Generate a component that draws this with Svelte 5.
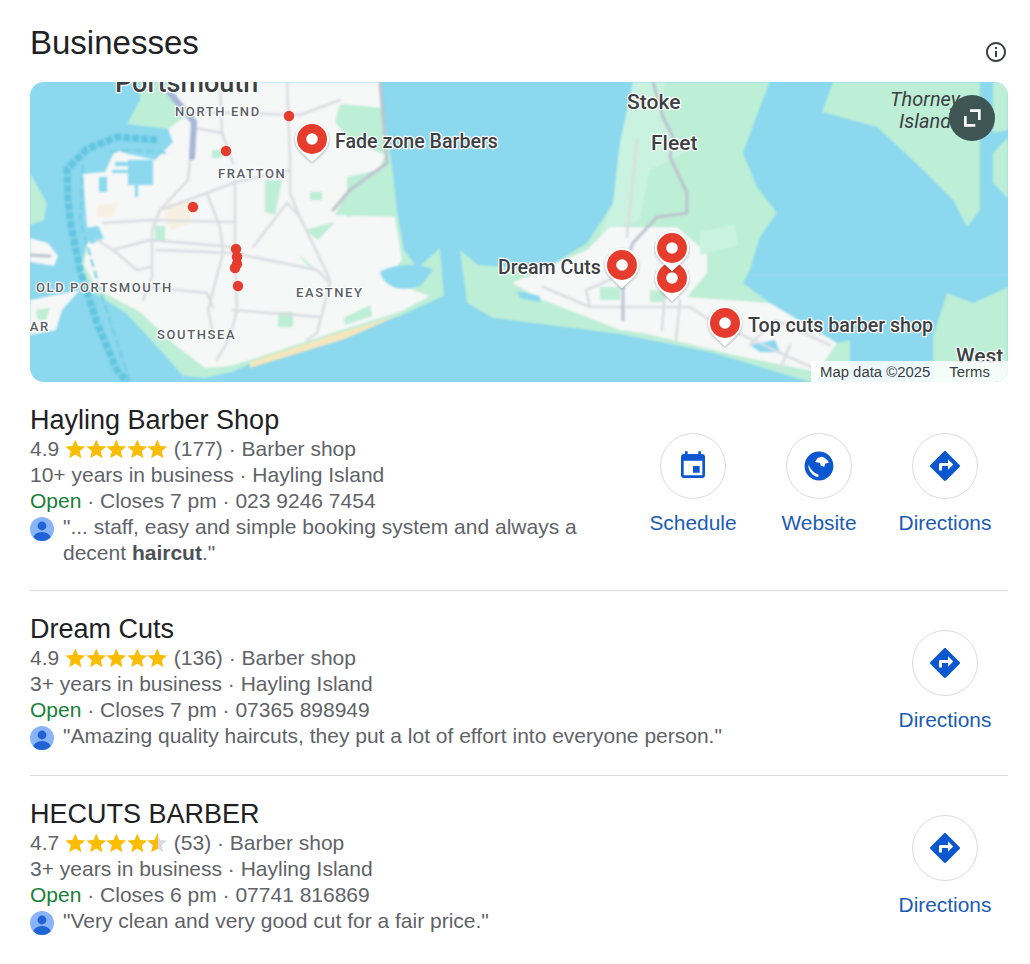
<script>
  const starPath = "M12 17.27 18.18 21l-1.64-7.03L22 9.24l-7.19-.61L12 2 9.19 8.63 2 9.24l5.46 4.73L5.82 21z";
  const halfPath = "M12.6 2v15.6L5.82 21l1.64-7.03L2 9.24l7.19-.61L12 2z";
  const shops = [
    { name: "Hayling Barber Shop", rating: "4.9", half: false, count: "(177)", years: "10+", hours: "Closes 7 pm", phone: "023 9246 7454",
      quote: ['"... staff, easy and simple booking system and always a decent ', 'haircut', '."'], actions: ["Schedule", "Website", "Directions"] },
    { name: "Dream Cuts", rating: "4.9", half: false, count: "(136)", years: "3+", hours: "Closes 7 pm", phone: "07365 898949",
      quote: ['"Amazing quality haircuts, they put a lot of effort into everyone person."', '', ''], actions: ["Directions"] },
    { name: "HECUTS BARBER", rating: "4.7", half: true, count: "(53)", years: "3+", hours: "Closes 6 pm", phone: "07741 816869",
      quote: ['"Very clean and very good cut for a fair price."', '', ''], actions: ["Directions"] }
  ];
  const dots = [[289,116],[226,151],[193,207],[236,249],[237,257],[237,264],[235,268],[238,286]];
  const pins = [[312,139],[622,265],[672,278],[672,248],[725,323]];
  const roads = [
    "M190 160 188 180 160 210 152 230 152 277 143 300",
    "M160 210 207 193 233 183 290 170",
    "M235 180 235 250 237 310 230 337 217 360",
    "M222 133 233 163",
    "M207 193 220 227 223 253 208 310 213 333",
    "M157 250 233 253 317 270 330 283 317 333 307 340",
    "M253 247 287 203 300 217 330 280",
    "M233 310 320 317",
    "M103 223 150 220 233 222",
    "M113 250 150 240 233 247",
    "M97 240 113 250 137 270 150 267",
    "M110 283 207 293 213 307",
    "M287 82 290 157 290 193 300 217",
    "M195 112 300 115 340 100",
    "M220 82 222 133 195 128",
    "M543 287 590 307 690 307 710 320 817 370",
    "M590 307 586 290 610 280",
    "M637 140 627 237",
    "M665 290 662 330",
    "M680 300 676 340",
    "M750 345 775 320 830 345",
    "M780 370 790 345"
  ];
</script>

<div class="page">
  <header class="head">
    <h2>Businesses</h2>
    <svg class="info" viewBox="0 0 24 24"><path d="M11 7h2v2h-2zm0 4h2v6h-2zm1-9C6.48 2 2 6.48 2 12s4.48 10 10 10 10-4.48 10-10S17.52 2 12 2zm0 18c-4.41 0-8-3.59-8-8s3.59-8 8-8 8 3.59 8 8-3.59 8-8 8z"/></svg>
  </header>

  <div class="map">
    <svg class="canvas" viewBox="30 82 978 300" width="978" height="300">
      <rect x="30" y="82" width="978" height="300" fill="#8bd8ef"/>
      <g class="soft">
        <!-- Portsea land -->
        <path class="green" d="M140 82H380L386 130 392 165 397 210 404 250 418 268 440 248 444 296 400 316 335 336 250 364 232 372 205 378 183 376 160 350 127 314 93 292 80 268 88 240 83 174 105 172 115 150 128 154 155 160 173 142 168 129 127 124 140 100Z"/>
        <path class="urban" d="M170 82H380L383 108 340 104 335 122 350 140 385 155 375 180 345 195 335 215 395 217 402 260 385 280 430 296 400 312 335 332 250 360 230 366 205 368 175 345 140 312 98 290 84 265 88 240 83 174 105 172 115 150 128 154 155 160 173 142 168 129 187 115Z"/>
        <path class="water" d="M128 160H153V185H128ZM99 177H107V192H99ZM135 184H138V197H135ZM380 272C392 264 420 262 433 270L420 286C400 292 385 288 380 272ZM84 228 98 226 104 238 92 244 86 240Z"/>
        <path class="water" d="M115 162H128V166H115ZM112 170H128V173H112Z"/>
        <!-- Gosport side -->
        <path class="green" d="M30 173 47 203 44 220 30 225Z"/>
        <path class="urban" d="M30 238 48 243 58 256 54 266 30 262Z"/>
        <path class="urban" d="M30 300 80 290 62 310 56 330 30 335Z"/>
        <path class="green" d="M36 310 50 308 46 320 38 320Z"/>
        <path class="sand" d="M250 362 335 334 400 315 345 339 250 368Z"/>
        <!-- parks -->
        <path class="green" d="M278 312H293V327H278ZM310 192H322V200H310ZM265 180H282L275 215 265 212ZM347 177 378 170 392 205 347 217ZM305 230 335 222 318 240ZM300 255 325 278 304 262ZM344 318 370 305 372 316 345 325ZM155 226H165V240H155ZM212 150H222V158H212Z"/>
        <path class="tan" d="M166 205 188 200 192 222 172 230 166 222Z"/>
        <path class="tan" d="M97 205 117 203 114 216 97 218Z"/>
        <!-- Hayling -->
        <path class="green" d="M633 82H770L760 107 743 153 757 187 777 213 760 237 750 270 743 283 770 303 837 343 850 340V372L810 382 710 352 620 334 493 318 467 303 460 250 478 265 543 270 587 243 613 203 620 143Z"/>
        <path class="light" d="M633 82H665L660 120 690 150 650 170 640 220 600 235 613 203 620 143Z"/>
        <path class="urban" d="M610 227H677L707 253 707 273 687 297 770 303 837 343 817 372 743 357 643 333 620 330 543 300 512 283 587 250Z"/>
        <path class="light" d="M700 232 735 224 738 245 700 255Z"/>
        <path class="green" d="M600 287H620V300H600ZM650 290 668 292 664 302 650 302Z"/>
        <path class="water" d="M517 291 540 296 540 302 520 298Z"/>
        <path class="water" d="M750 345 775 340 780 352 760 352Z"/>
        <!-- Thorney and West -->
        <path class="green" d="M833 82 822 112 877 127 920 167 953 200 967 227 980 210V82Z"/>
        <path class="green" d="M993 82H1008V130L993 133ZM1008 137 993 153V183L1008 198ZM933 337 947 293 973 303 1008 287V382H933Z"/>
        <path d="M750 275H1008" stroke="#a4e1f2" stroke-width="1" fill="none"/>
        <!-- roads -->
        {#each roads as d}
          <path class="road" {d}/>
        {/each}
        <path class="major" d="M333 210 350 190 387 163 380 82"/>
        <path class="major" d="M30 255 50 256"/>
        <path class="blue" d="M170 93 194 122 192 157"/>
        <path class="major" d="M653 82 663 117 673 137 670 157 687 193 687 213 657 217 633 243 623 270 623 320"/>
        <!-- channel -->
        <path class="channel" d="M157 140 117 137 87 149 67 169 68 199 70 220 80 270 97 323 117 370 127 382"/>
        <path class="channel thin" d="M110 152 130 150 170 153M83 165 80 220 100 290 130 382"/>
      </g>

      <g class="area">
        <text x="175" y="116">NORTH END</text>
        <text x="218" y="178">FRATTON</text>
        <text x="36" y="292">OLD PORTSMOUTH</text>
        <text x="296" y="297">EASTNEY</text>
        <text x="157" y="339">SOUTHSEA</text>
        <text x="21" y="331">LAR</text>
      </g>
      <g class="place">
        <text x="115" y="92" class="big">Portsmouth</text>
        <text x="627" y="109">Stoke</text>
        <text x="651" y="150">Fleet</text>
        <text x="956" y="363">West</text>
        <text x="890" y="106" class="ital">Thorney</text>
        <text x="899" y="128" class="ital">Island</text>
      </g>

      {#each dots as [x, y]}
        <circle cx={x} cy={y} r="5.2" fill="#e53c2e"/>
      {/each}

      {#each pins as [x, y]}
        <g transform="translate({x} {y})">
          <path class="pinbase" d="M0 23.5 -12 12A17 17 0 1 1 12 12Z"/>
          <circle r="15" fill="#e53c2e"/>
          <circle r="5.8" fill="#fff"/>
        </g>
      {/each}

      <g class="poi">
        <text x="335" y="148">Fade zone Barbers</text>
        <text x="498" y="274">Dream Cuts</text>
        <text x="748" y="332">Top cuts barber shop</text>
      </g>
    </svg>

    <button class="expand" aria-label="Expand map">
      <svg viewBox="0 0 24 24"><path d="M7 10.5V17.5H14.5M10.5 6.5H17.5V13.5"/></svg>
    </button>
    <div class="attr"><span>Map data ©2025</span><span>Terms</span></div>
  </div>

  <div class="list">
    {#each shops as s}
      <article class="row">
        <div class="info-col">
          <h3>{s.name}</h3>
          <div class="line">
            {s.rating}
            <span class="stars">
              {#each [0, 1, 2, 3, 4] as i}
                <svg viewBox="1.6 1.6 20.8 20.8">
                  {#if s.half && i === 4}
                    <path d={starPath} fill="#dadce0"/>
                    <path d={halfPath} fill="#fbbc04"/>
                  {:else}
                    <path d={starPath} fill="#fbbc04"/>
                  {/if}
                </svg>
              {/each}
            </span>
            {s.count} · Barber shop
          </div>
          <div class="line">{s.years} years in business · Hayling Island</div>
          <div class="line"><span class="open">Open</span> · {s.hours} · {s.phone}</div>
          <div class="quote">
            <svg class="avatar" viewBox="0 0 24 24">
              <defs><clipPath id="av"><circle cx="12" cy="12" r="12"/></clipPath></defs>
              <circle cx="12" cy="12" r="12" fill="#8ab4f8"/>
              <g clip-path="url(#av)" fill="#1f63d6">
                <circle cx="12" cy="9" r="4.4"/>
                <ellipse cx="12" cy="21.5" rx="9" ry="6.5"/>
              </g>
            </svg>
            <p>{s.quote[0]}{#if s.quote[1]}<b>{s.quote[1]}</b>{/if}{s.quote[2]}</p>
          </div>
        </div>
        <div class="actions">
          {#each s.actions as a}
            <div class="action">
              <span class="circle">
                {#if a === "Schedule"}
                  <svg viewBox="0 0 24 24"><path d="M17 12h-5v5h5v-5zM16 1v2H8V1H6v2H5c-1.11 0-1.99.9-1.99 2L3 19c0 1.1.89 2 2 2h14c1.1 0 2-.9 2-2V5c0-1.1-.9-2-2-2h-1V1h-2zm3 18H5V8h14v11z"/></svg>
                {:else if a === "Website"}
                  <svg viewBox="0 0 24 24"><path fill-rule="evenodd" d="M12 1.2a10.8 10.8 0 1 0 0 21.6 10.8 10.8 0 0 0 0-21.6ZM3.9 11C4 15.5 7 19.5 11.6 20.5L11.5 18.4C8.5 17.5 6 15 3.9 11ZM9 8.8 11 6 14 5C16.5 5.6 18.5 7.3 19.4 9.3L16.6 10.4 16 12.6 13.4 11.8 12.6 9.6 9.6 9.2Z"/></svg>
                {:else}
                  <svg class="dir" viewBox="0 0 24 24"><path d="M21.71 11.29l-9-9c-.39-.39-1.02-.39-1.41 0l-9 9c-.39.39-.39 1.02 0 1.41l9 9c.39.39 1.02.39 1.41 0l9-9c.39-.38.39-1.01 0-1.41zM14 14.5V12h-4v3H8v-4c0-.55.45-1 1-1h5V7.5l3.5 3.5-3.5 3.5z"/></svg>
                {/if}
              </span>
              <span class="label">{a}</span>
            </div>
          {/each}
        </div>
      </article>
    {/each}
  </div>
</div>

<style>
  :global(body) { background: #fff; }
  .page { padding: 0 22px 0 30px; font-family: "Liberation Sans", Arial, sans-serif; color: #5f6368; }

  .head { display: flex; justify-content: space-between; height: 82px; }
  h2 { margin: 23px 0 0; font-size: 33px; line-height: 40px; font-weight: 400; color: #202124; }
  .info { width: 24px; height: 24px; margin-top: 40px; fill: #3c4043; }

  .map { position: relative; height: 300px; border-radius: 14px; overflow: hidden; }
  .canvas { display: block; }
  .soft { filter: blur(1px); }
  .green { fill: #bdeed6; }
  .light { fill: #caf2e0; }
  .urban { fill: #f6f7f7; }
  .water { fill: #8bd8ef; }
  .sand { fill: #f6e6bc; }
  .tan { fill: #f7f0e2; }
  .road, .major, .blue, .channel { fill: none; stroke-linejoin: round; stroke-linecap: round; }
  .road { stroke: #dadde2; stroke-width: 2.5; }
  .major { stroke: #bcc4cf; stroke-width: 3; }
  .blue { stroke: #a7b6d8; stroke-width: 6; }
  .channel { stroke: #62c5df; stroke-width: 7; stroke-dasharray: 7 2; stroke-linecap: butt; }
  .channel.thin { stroke: #72cbe3; stroke-width: 2; stroke-dasharray: 8 4; }

  .canvas text { font-family: Roboto, "Liberation Sans", sans-serif; paint-order: stroke; stroke-linejoin: round; }
  .area text { font-size: 13px; font-weight: 500; letter-spacing: 1.6px; fill: #5a5f66; stroke: #fff; stroke-width: 2.5px; }
  .place text { font-size: 21px; font-weight: 500; fill: #3c4043; stroke: #fff; stroke-width: 2.5px; }
  .place .big { font-size: 27px; }
  .place .ital { font-size: 20px; font-weight: 400; font-style: italic; stroke: none; }
  .poi text { font-size: 19.6px; font-weight: 500; fill: #3c4043; stroke: #fff; stroke-width: 2.5px; }
  .pinbase { fill: #fff; filter: drop-shadow(0 1px 1px rgba(0, 0, 0, .3)); }

  .expand { position: absolute; top: 13px; right: 13px; width: 46px; height: 46px; padding: 0; border: 0; border-radius: 50%; background: #3f5553; display: flex; align-items: center; justify-content: center; }
  .expand svg { width: 32px; height: 32px; fill: none; stroke: #fff; stroke-width: 2; }
  .attr { position: absolute; right: 0; bottom: 0; width: 197px; height: 21px; padding-left: 9px; box-sizing: border-box; background: rgba(255, 255, 255, .85); display: flex; gap: 19px; font-size: 14.9px; line-height: 23px; color: #3c4043; }

  .row { display: flex; align-items: center; padding: 23px 0 24px; }
  .row + .row { border-top: 1px solid #dadce0; }
  .info-col { flex: 1; min-width: 0; }
  h3 { margin: 0 0 1px; font-size: 27px; line-height: 30px; font-weight: 400; color: #202124; }
  .line { display: flex; font-size: 21px; line-height: 26px; white-space: pre-wrap; }
  .stars { display: inline-flex; align-items: center; }
  .stars svg { width: 20.6px; height: 20.6px; display: block; }
  .open { color: #188038; }
  .quote { display: flex; gap: 9px; min-height: 28px; font-size: 21px; line-height: 26px; }
  .quote p { margin: 0; }
  .quote b { color: #4d5156; }
  .avatar { flex: none; width: 24px; height: 24px; margin-top: 3px; }

  .actions { display: flex; flex: none; }
  .action { width: 126px; height: 105px; display: flex; flex-direction: column; align-items: center; }
  .circle { width: 66px; height: 66px; box-sizing: border-box; border: 1px solid #dadce0; border-radius: 50%; display: flex; align-items: center; justify-content: center; }
  .circle svg { width: 32px; height: 32px; fill: #0b57d0; }
  .circle svg.dir { width: 36px; height: 36px; }
  .label { margin-top: 11px; font-size: 20.9px; line-height: 26px; color: #1a5cb5; }
</style>
